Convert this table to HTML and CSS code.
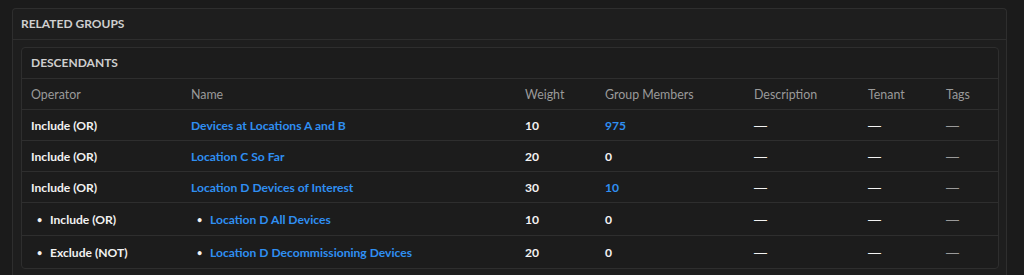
FILE: index.html
```html
<!DOCTYPE html>
<html>
<head>
<meta charset="utf-8">
<link rel="stylesheet" href="styles.css">
</head>
<body>
<div class="panel">
  <div class="panel-heading">Related Groups</div>
  <div class="panel-body">
    <div class="card">
      <div class="card-heading">Descendants</div>
      <table class="grid">
        <colgroup>
          <col class="c-op"><col class="c-name"><col class="c-weight"><col class="c-members"><col class="c-desc"><col class="c-tenant"><col class="c-tags">
        </colgroup>
        <thead>
          <tr><th>Operator</th><th>Name</th><th>Weight</th><th>Group Members</th><th>Description</th><th>Tenant</th><th>Tags</th></tr>
        </thead>
        <tbody>
          <tr><td>Include (OR)</td><td><a href="#">Devices at Locations A and B</a></td><td>10</td><td><a href="#">975</a></td><td><span class="dash">—</span></td><td><span class="dash">—</span></td><td class="muted"><span class="dash">—</span></td></tr>
          <tr><td>Include (OR)</td><td><a href="#">Location C So Far</a></td><td>20</td><td>0</td><td><span class="dash">—</span></td><td><span class="dash">—</span></td><td class="muted"><span class="dash">—</span></td></tr>
          <tr><td>Include (OR)</td><td><a href="#">Location D Devices of Interest</a></td><td>30</td><td><a href="#">10</a></td><td><span class="dash">—</span></td><td><span class="dash">—</span></td><td class="muted"><span class="dash">—</span></td></tr>
          <tr class="nested"><td><span class="bullet">•</span>Include (OR)</td><td><span class="bullet">•</span><a href="#">Location D All Devices</a></td><td>10</td><td>0</td><td><span class="dash">—</span></td><td><span class="dash">—</span></td><td class="muted"><span class="dash">—</span></td></tr>
          <tr class="nested"><td><span class="bullet">•</span>Exclude (NOT)</td><td><span class="bullet">•</span><a href="#">Location D Decommissioning Devices</a></td><td>20</td><td>0</td><td><span class="dash">—</span></td><td><span class="dash">—</span></td><td class="muted"><span class="dash">—</span></td></tr>
        </tbody>
      </table>
    </div>
  </div>
</div>
</body>
</html>
```

FILE: styles.css
```css
html, body {
  margin: 0;
  background: #1b1b1b;
}
body {
  padding: 8px 17px 0 12px;
  font-family: Lato, "Open Sans", "Noto Sans", sans-serif;
  font-size: 13px;
  color: #f2f2f2;
}
.panel {
  background: #1e1e1e;
  border: 1px solid #2e2e2e;
  border-bottom: none;
  border-radius: 4px 4px 0 0;
}
.panel-heading {
  height: 30px;
  line-height: 30px;
  padding-left: 8px;
  border-bottom: 1px solid #2e2e2e;
  font-weight: 700;
  font-size: 12px;
  text-transform: uppercase;
  color: #cfcfcf;
}
.panel-body {
  padding: 7px 7px 6px 8px;
}
.card {
  border: 1px solid #2e2e2e;
  border-radius: 4px;
  background: #1c1c1c;
}
.card-heading {
  height: 30px;
  line-height: 30px;
  padding-left: 9px;
  border-bottom: 1px solid #2e2e2e;
  font-weight: 700;
  font-size: 12px;
  text-transform: uppercase;
  color: #cfcfcf;
}
.grid {
  width: 100%;
  border-collapse: collapse;
  table-layout: fixed;
}
.c-op { width: 169px; }
.c-name { width: 334px; }
.c-weight { width: 80px; }
.c-members { width: 149px; }
.c-desc { width: 114px; }
.c-tenant { width: 78px; }
.grid th {
  text-align: left;
  font-weight: 400;
  font-size: 12.4px;
  color: #9a9a9a;
  height: 30px;
  padding: 0;
  border-bottom: 1px solid #2e2e2e;
}
.grid th:first-child, .grid td:first-child { padding-left: 9px; }
.grid td {
  height: 30px;
  padding: 0;
  font-weight: 700;
  font-size: 12.1px;
  border-bottom: 1px solid #2e2e2e;
  white-space: nowrap;
}
.grid tr.nested td { height: 32px; }
.grid tbody tr:last-child td { border-bottom: none; }
.grid a {
  color: #2f8ff2;
  text-decoration: none;
}
.grid td.muted { color: #9a9a9a; }
.dash {
  font-family: "Liberation Sans", sans-serif;
  font-weight: 400;
  font-size: 13px;
}
.bullet {
  display: inline-block;
  width: 13px;
  margin-left: 6px;
  font-size: 9px;
  vertical-align: 1px;
  color: #f2f2f2;
}
```
